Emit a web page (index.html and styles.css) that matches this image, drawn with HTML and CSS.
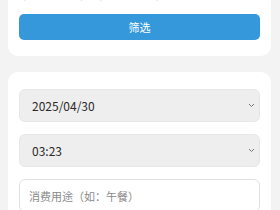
FILE: index.html
```html
<!DOCTYPE html>
<html lang="zh-CN">
<head>
    <meta charset="UTF-8">
    <meta name="viewport" content="width=device-width, initial-scale=1.0">
    <title>记账</title>
    <link rel="stylesheet" href="styles.css">
</head>
<body>
    <div class="card filter-card">
        <div class="date-range">
            <input type="text" class="range-input">
            <input type="text" class="range-input">
        </div>
        <button class="btn-filter">筛选</button>
    </div>

    <div class="card form-card">
        <div class="select-wrap">
            <select class="field-select">
                <option>2025/04/30</option>
            </select>
            <svg class="chevron" width="7" height="5" viewBox="0 0 7 5">
                <path d="M1 1 L3.5 3.5 L6 1" fill="none" stroke="#777" stroke-width="1"/>
            </svg>
        </div>
        <div class="select-wrap">
            <select class="field-select">
                <option>03:23</option>
            </select>
            <svg class="chevron" width="7" height="5" viewBox="0 0 7 5">
                <path d="M1 1 L3.5 3.5 L6 1" fill="none" stroke="#777" stroke-width="1"/>
            </svg>
        </div>
        <input type="text" class="field-input" placeholder="消费用途（如：午餐）">
    </div>
</body>
</html>
```

FILE: styles.css
```css
body {
    margin: 0;
    padding: 0 9px 0 8px;
    background: #f3f3f3;
    font-family: "Noto Sans CJK SC", "Noto Sans", sans-serif;
    color: #333333;
    overflow: hidden;
    height: 210px;
}

.card {
    background: #ffffff;
    border-radius: 10px;
    padding: 0 11px;
}

.filter-card {
    margin-top: -20px;
    padding-top: 0;
    padding-bottom: 16px;
    border-radius: 0 0 10px 10px;
}

.date-range {
    display: flex;
    gap: 14px;
    padding-left: 3px;
    height: 21px;
    overflow: hidden;
}

.range-input {
    width: 62px;
    height: 30px;
    margin-top: -8px;
    box-sizing: border-box;
    border: 1px solid #e2e2e2;
    border-radius: 5px;
    background: #ffffff;
}

.btn-filter {
    display: block;
    width: 100%;
    height: 26px;
    margin-top: 13px;
    border: none;
    border-radius: 5px;
    background: #3498db;
    color: #ffffff;
    font-family: "Noto Sans CJK SC", sans-serif;
    font-size: 11px;
}

.form-card {
    margin-top: 16px;
    padding-top: 17px;
    padding-bottom: 20px;
    display: flex;
    flex-direction: column;
    gap: 12px;
}

.select-wrap {
    position: relative;
}

.field-select {
    appearance: none;
    -webkit-appearance: none;
    display: block;
    width: 100%;
    height: 33px;
    padding: 0 12px;
    border: 1px solid #e6e6e6;
    border-radius: 6px;
    background: #eeeeee;
    color: #2a2a2a;
    font-family: "Noto Sans CJK SC", sans-serif;
    font-size: 12px;
}

.chevron {
    position: absolute;
    right: 5px;
    top: 14px;
}

.field-input {
    display: block;
    width: 100%;
    height: 33px;
    box-sizing: border-box;
    padding: 0 9px;
    border: 1px solid #e0e0e0;
    border-radius: 6px;
    background: #ffffff;
    font-family: "Noto Sans CJK SC", sans-serif;
    font-size: 11px;
}

.field-input::placeholder {
    color: #8a8a8a;
}
```
